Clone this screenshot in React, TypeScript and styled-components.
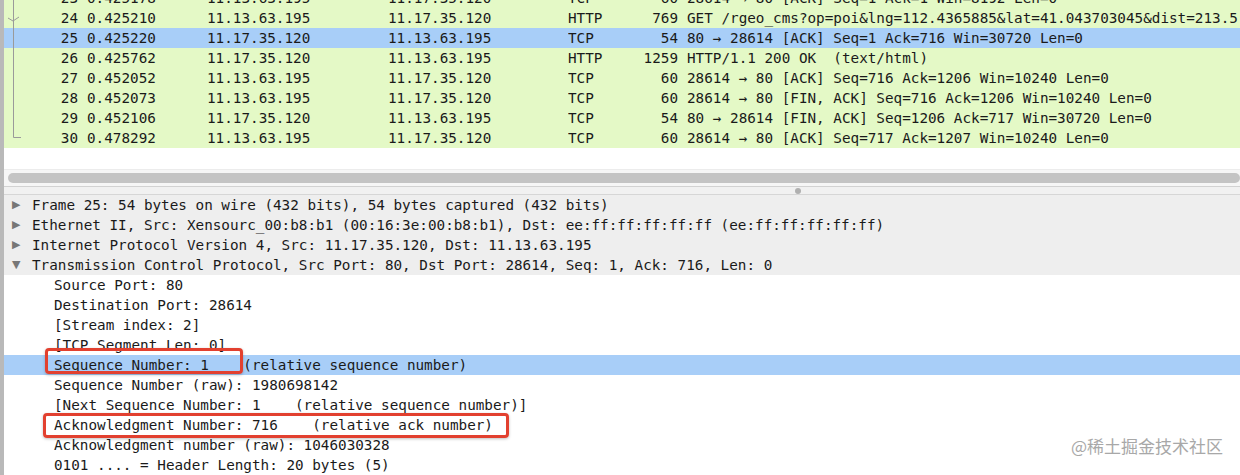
import React from "react";
import styled, { createGlobalStyle } from "styled-components";

const GlobalStyle = createGlobalStyle`
  html, body {
    margin: 0;
    padding: 0;
    background: #ffffff;
    overflow: hidden;
  }
`;

const Window = styled.div`
  position: relative;
  width: 1240px;
  height: 475px;
  overflow: hidden;
  box-sizing: border-box;
  border-left: 4px solid #b9b9b9;
  display: flex;
  flex-direction: column;
  font-family: "DejaVu Sans Mono", "Liberation Mono", monospace;
  font-size: 14.3px;
  color: #1a1a1a;
`;

const PacketList = styled.div`
  margin-top: -12px;
  display: flex;
  flex-direction: column;
`;

const PacketRow = styled.div<{ $selected?: boolean }>`
  height: 20px;
  line-height: 20px;
  display: grid;
  grid-template-columns: 74px 9px 120px 181px 180px 65px 45px 9px 1fr;
  background: ${(p) => (p.$selected ? "#a8cef8" : "#e4f9c6")};
  white-space: pre;
`;

const NoCell = styled.div`
  display: flex;
  justify-content: space-between;
  align-items: stretch;
`;

const Cell = styled.div<{ $right?: boolean }>`
  text-align: ${(p) => (p.$right ? "right" : "left")};
  overflow: hidden;
`;

const InfoCell = styled.div`
  grid-column: 9;
  overflow: visible;
`;

const Gutter = styled.svg`
  width: 24px;
  height: 20px;
  flex-shrink: 0;
`;

const EmptyList = styled.div`
  height: 24px;
  background: #ffffff;
`;

const ScrollTrack = styled.div`
  height: 17px;
  box-sizing: border-box;
  background: #f6f6f6;
  border-top: 1px solid #ececec;
  padding: 3px 0 3px 4px;
`;

const Thumb = styled.div`
  height: 10px;
  border-radius: 5px;
  background: #c4c4c4;
`;

const Splitter = styled.div`
  height: 10px;
  box-sizing: border-box;
  border-top: 1px solid #d2d2d2;
  border-bottom: 1px solid #d6d6d6;
  background: #f1f1f1;
  display: flex;
  justify-content: center;
  align-items: center;
  padding-left: 352px;
`;

const Handle = styled.div`
  width: 6px;
  height: 6px;
  border-radius: 50%;
  background: #b0b0b0;
`;

const Details = styled.div`
  display: flex;
  flex-direction: column;
  background: #ffffff;
`;

const DetailRow = styled.div<{ $level: number; $selected?: boolean; $top?: boolean }>`
  position: relative;
  height: 20px;
  line-height: 20px;
  display: flex;
  align-items: center;
  white-space: pre;
  padding-left: ${(p) => (p.$level === 0 ? 8 : 50)}px;
  background: ${(p) =>
    p.$selected ? "#a8cef8" : p.$top ? "#eeeeee" : "#ffffff"};
`;

const Expander = styled.span`
  display: inline-block;
  width: 20px;
  color: #777777;
  font-size: 11px;
  font-family: "DejaVu Sans", sans-serif;
`;

const Callout = styled.div<{ $top: number; $left: number; $width: number; $height: number }>`
  position: absolute;
  z-index: 2;
  top: ${(p) => p.$top}px;
  left: ${(p) => p.$left}px;
  width: ${(p) => p.$width}px;
  height: ${(p) => p.$height}px;
  box-sizing: border-box;
  border: 3px solid #e2402f;
  border-radius: 4px;
  box-shadow: 0 1px 3px rgba(0, 0, 0, 0.25);
  pointer-events: none;
`;

const Watermark = styled.div`
  position: absolute;
  right: 17px;
  bottom: 17px;
  font-family: "Noto Sans CJK SC", "Noto Sans", sans-serif;
  font-size: 17px;
  color: #a8a8a8;
  text-shadow: 0 0 1px #ffffff, 1px 1px 0 #ffffff, -1px -1px 0 #ffffff;
`;

type Packet = {
  no: number;
  time: string;
  src: string;
  dst: string;
  proto: string;
  len: number;
  info: string;
};

const packets: Packet[] = [
  { no: 23, time: "0.425178", src: "11.13.63.195", dst: "11.17.35.120", proto: "TCP", len: 60, info: "28614 → 80 [ACK] Seq=1 Ack=1 Win=8192 Len=0" },
  { no: 24, time: "0.425210", src: "11.13.63.195", dst: "11.17.35.120", proto: "HTTP", len: 769, info: "GET /rgeo_cms?op=poi&lng=112.4365885&lat=41.043703045&dist=213.5" },
  { no: 25, time: "0.425220", src: "11.17.35.120", dst: "11.13.63.195", proto: "TCP", len: 54, info: "80 → 28614 [ACK] Seq=1 Ack=716 Win=30720 Len=0" },
  { no: 26, time: "0.425762", src: "11.17.35.120", dst: "11.13.63.195", proto: "HTTP", len: 1259, info: "HTTP/1.1 200 OK  (text/html)" },
  { no: 27, time: "0.452052", src: "11.13.63.195", dst: "11.17.35.120", proto: "TCP", len: 60, info: "28614 → 80 [ACK] Seq=716 Ack=1206 Win=10240 Len=0" },
  { no: 28, time: "0.452073", src: "11.13.63.195", dst: "11.17.35.120", proto: "TCP", len: 60, info: "28614 → 80 [FIN, ACK] Seq=716 Ack=1206 Win=10240 Len=0" },
  { no: 29, time: "0.452106", src: "11.17.35.120", dst: "11.13.63.195", proto: "TCP", len: 54, info: "80 → 28614 [FIN, ACK] Seq=1206 Ack=717 Win=30720 Len=0" },
  { no: 30, time: "0.478292", src: "11.13.63.195", dst: "11.17.35.120", proto: "TCP", len: 60, info: "28614 → 80 [ACK] Seq=717 Ack=1207 Win=10240 Len=0" },
];

const TreeMark = ({ no }: { no: number }) => (
  <Gutter viewBox="0 0 24 20">
    {no < 30 && <line x1="9.5" y1="0" x2="9.5" y2="20" stroke="#9a9a9a" strokeWidth="1" />}
    {no === 30 && (
      <polyline points="9.5,0 9.5,9.5 17,9.5" fill="none" stroke="#9a9a9a" strokeWidth="1" />
    )}
    {no === 24 && (
      <polyline points="4,10 9,13 15,9" fill="none" stroke="#9a9a9a" strokeWidth="1" />
    )}
  </Gutter>
);

type Detail = {
  text: string;
  level: number;
  open?: boolean;
  selected?: boolean;
  callout?: { top: number; left: number; width: number; height: number };
};

const details: Detail[] = [
  { text: "Frame 25: 54 bytes on wire (432 bits), 54 bytes captured (432 bits)", level: 0 },
  { text: "Ethernet II, Src: Xensourc_00:b8:b1 (00:16:3e:00:b8:b1), Dst: ee:ff:ff:ff:ff:ff (ee:ff:ff:ff:ff:ff)", level: 0 },
  { text: "Internet Protocol Version 4, Src: 11.17.35.120, Dst: 11.13.63.195", level: 0 },
  { text: "Transmission Control Protocol, Src Port: 80, Dst Port: 28614, Seq: 1, Ack: 716, Len: 0", level: 0, open: true },
  { text: "Source Port: 80", level: 1 },
  { text: "Destination Port: 28614", level: 1 },
  { text: "[Stream index: 2]", level: 1 },
  { text: "[TCP Segment Len: 0]", level: 1 },
  { text: "Sequence Number: 1    (relative sequence number)", level: 1, selected: true, callout: { top: -7, left: 41, width: 198, height: 26 } },
  { text: "Sequence Number (raw): 1980698142", level: 1 },
  { text: "[Next Sequence Number: 1    (relative sequence number)]", level: 1 },
  { text: "Acknowledgment Number: 716    (relative ack number)", level: 1, callout: { top: -2, left: 39, width: 466, height: 25 } },
  { text: "Acknowledgment number (raw): 1046030328", level: 1 },
  { text: "0101 .... = Header Length: 20 bytes (5)", level: 1 },
];

export default function App() {
  return (
    <>
      <GlobalStyle />
      <Window>
        <PacketList>
          {packets.map((p) => (
            <PacketRow key={p.no} $selected={p.no === 25}>
              <NoCell>
                <TreeMark no={p.no} />
                <span>{p.no}</span>
              </NoCell>
              <span />
              <Cell>{p.time}</Cell>
              <Cell>{p.src}</Cell>
              <Cell>{p.dst}</Cell>
              <Cell>{p.proto}</Cell>
              <Cell $right>{p.len}</Cell>
              <InfoCell>{p.info}</InfoCell>
            </PacketRow>
          ))}
        </PacketList>
        <EmptyList />
        <ScrollTrack>
          <Thumb />
        </ScrollTrack>
        <Splitter>
          <Handle />
        </Splitter>
        <Details>
          {details.map((d, i) => (
            <DetailRow key={i} $level={d.level} $selected={d.selected} $top={d.level === 0}>
              {d.level === 0 && <Expander>{d.open ? "▼" : "▶"}</Expander>}
              {d.text}
              {d.callout && (
                <Callout
                  $top={d.callout.top}
                  $left={d.callout.left}
                  $width={d.callout.width}
                  $height={d.callout.height}
                />
              )}
            </DetailRow>
          ))}
        </Details>
        <Watermark>@稀土掘金技术社区</Watermark>
      </Window>
    </>
  );
}
